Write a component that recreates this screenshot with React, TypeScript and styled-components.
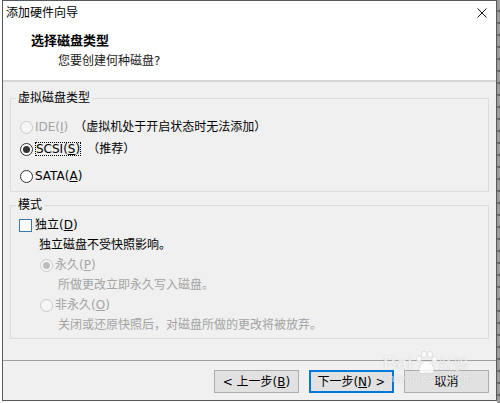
import React from 'react';
import styled, { createGlobalStyle, css } from 'styled-components';

const GlobalStyle = createGlobalStyle`
  html, body {
    margin: 0;
    padding: 0;
    background: #ffffff;
  }
  body {
    font-family: "DejaVu Sans", "Noto Sans CJK SC", sans-serif;
    font-size: 12px;
    color: #000;
  }
`;

const Screen = styled.div`
  display: flex;
  height: 403px;
  padding-left: 2px;
  box-sizing: border-box;
  overflow: hidden;
`;

const Window = styled.div`
  position: relative;
  display: flex;
  flex-direction: column;
  width: 495px;
  height: 401px;
  box-sizing: border-box;
  border: 1px solid #555a5e;
  background: #f0f0f0;
`;

const BackEdge = styled.div`
  width: 3px;
  background: repeating-linear-gradient(to bottom, #9c9c9c 0 10px, #6e6e6e 10px 12px);
`;

const TitleBar = styled.div`
  display: flex;
  align-items: center;
  justify-content: space-between;
  height: 24px;
  padding: 0 9px 0 3px;
  background: #fff;
  line-height: 16px;
`;

const Header = styled.div`
  display: flex;
  flex-direction: column;
  height: 55px;
  box-sizing: border-box;
  padding: 8px 0 0 28px;
  background: #fff;
`;

const HeaderTitle = styled.div`
  font-size: 13px;
  font-weight: 700;
  line-height: 16px;
`;

const HeaderSub = styled.div`
  margin-top: 4px;
  padding-left: 27px;
  line-height: 16px;
  color: #1a1a1a;
`;

const HeaderRule = styled.div`
  height: 2px;
  background: #d6d6d6;
`;

const Body = styled.div`
  flex: 1;
  padding: 0 7px 0 7px;
`;

const GroupBox = styled.fieldset<{ $top: number }>`
  margin: ${({ $top }) => $top}px 0 0 0;
  padding: 0;
  min-inline-size: 0;
  border: 1px solid #dcdcdc;
`;

const Legend = styled.legend`
  margin-left: 5px;
  padding: 0 2px;
  line-height: 14px;
  font-size: 12px;
`;

const GroupBody = styled.div<{ $inset: number; $top: number; $bottom: number }>`
  display: flex;
  flex-direction: column;
  padding: ${({ $top, $inset, $bottom }) => `${$top}px 0 ${$bottom}px ${$inset}px`};
`;

const OptionRow = styled.div<{ $h?: number; $indent?: number; $gap?: number }>`
  display: flex;
  align-items: center;
  height: ${({ $h }) => $h ?? 20}px;
  margin-top: ${({ $gap }) => $gap ?? 0}px;
  padding-left: ${({ $indent }) => $indent ?? 0}px;
  white-space: nowrap;
`;

const RadioMark = styled.span<{ $checked?: boolean; $disabled?: boolean }>`
  position: relative;
  flex: none;
  width: 13px;
  height: 13px;
  box-sizing: border-box;
  margin-right: 2px;
  border-radius: 50%;
  border: 1px solid ${({ $disabled }) => ($disabled ? '#cacaca' : '#333')};
  background: ${({ $disabled }) => ($disabled ? '#f6f6f6' : '#fff')};
  ${({ $checked, $disabled }) =>
    $checked &&
    css`
      &::after {
        content: '';
        position: absolute;
        left: 2px;
        top: 2px;
        width: 7px;
        height: 7px;
        border-radius: 50%;
        background: ${$disabled ? '#bdbdbd' : '#333'};
      }
    `}
`;

const CheckMark = styled.span`
  flex: none;
  width: 13px;
  height: 13px;
  box-sizing: border-box;
  margin-right: 3px;
  border: 1px solid #3a78b0;
  background: #fff;
`;

const Label = styled.span<{ $disabled?: boolean }>`
  line-height: 16px;
  color: ${({ $disabled }) => ($disabled ? '#a3a3a3' : '#000')};
`;

const Focus = styled.span`
  padding: 0 1px;
  outline: 1px dotted #000;
  outline-offset: -1px;
`;

const Note = styled.span`
  margin-left: 6px;
  line-height: 16px;
`;

const Footer = styled.div`
  display: flex;
  justify-content: flex-end;
  gap: 10px;
  padding: 9px 7px 7px 0;
  border-top: 1px solid #a0a0a0;
`;

const Button = styled.button<{ $primary?: boolean }>`
  width: 85px;
  height: 23px;
  box-sizing: border-box;
  padding: 0;
  border: 1px solid #adadad;
  background: #e1e1e1;
  font: inherit;
  font-size: 12px;
  line-height: 16px;
  color: #000;
  ${({ $primary }) =>
    $primary &&
    css`
      border: 2px solid #0078d7;
    `}
`;

const Watermark = styled.div`
  position: absolute;
  left: 380px;
  top: 350px;
  display: flex;
  flex-direction: column;
  align-items: flex-start;
  color: rgba(255, 255, 255, 0.8);
  text-shadow: 0 0 1px rgba(0, 0, 0, 0.22);
  pointer-events: none;
`;

const Brand = styled.div`
  display: flex;
  align-items: center;
  font-family: "Liberation Sans", sans-serif;
  font-size: 19px;
  font-weight: 700;
  line-height: 24px;
`;

const BrandCn = styled.span`
  font-family: "Noto Sans CJK SC", sans-serif;
  font-size: 15px;
  font-weight: 400;
`;

const Site = styled.div`
  margin-top: -2px;
  font-family: "Liberation Sans", sans-serif;
  font-size: 10px;
  line-height: 12px;
  letter-spacing: 0.5px;
`;

const CloseIcon = () => (
  <svg width="10" height="10" viewBox="0 0 10 10">
    <path d="M0.5 0.5 L9.5 9.5 M9.5 0.5 L0.5 9.5" stroke="#111" strokeWidth="1" />
  </svg>
);

const Paw = () => (
  <svg width="26" height="24" viewBox="0 0 26 24">
    <g fill="rgba(255,255,255,0.8)" stroke="rgba(0,0,0,0.12)" strokeWidth="0.8">
      <ellipse cx="6" cy="8" rx="2.6" ry="3.2" />
      <ellipse cx="11" cy="3.5" rx="2.6" ry="3.2" />
      <ellipse cx="17" cy="3.5" rx="2.6" ry="3.2" />
      <ellipse cx="21.5" cy="8.5" rx="2.6" ry="3.2" />
      <path d="M6 20 C6 14 10 10 13.5 10 C17 10 21 14 21 20 C21 23 17 23 13.5 22 C10 23 6 23 6 20 Z" />
    </g>
  </svg>
);

const Key: React.FC<{ children: React.ReactNode }> = ({ children }) => <u>{children}</u>;

export default function App() {
  return (
    <>
      <GlobalStyle />
      <Screen>
        <Window>
          <TitleBar>
            <span>添加硬件向导</span>
            <CloseIcon />
          </TitleBar>
          <Header>
            <HeaderTitle>选择磁盘类型</HeaderTitle>
            <HeaderSub>您要创建何种磁盘?</HeaderSub>
          </Header>
          <HeaderRule />
          <Body>
            <GroupBox $top={9}>
              <Legend>虚拟磁盘类型</Legend>
              <GroupBody $inset={9} $top={11} $bottom={4}>
                <OptionRow $h={22}>
                  <RadioMark $disabled />
                  <Label $disabled>
                    IDE(<Key>I</Key>)
                  </Label>
                  <Note>（虚拟机处于开启状态时无法添加）</Note>
                </OptionRow>
                <OptionRow $h={22}>
                  <RadioMark $checked />
                  <Label>
                    <Focus>
                      SCSI(<Key>S</Key>)
                    </Focus>
                  </Label>
                  <Note>（推荐）</Note>
                </OptionRow>
                <OptionRow $h={22} $gap={5}>
                  <RadioMark />
                  <Label>
                    SATA(<Key>A</Key>)
                  </Label>
                </OptionRow>
              </GroupBody>
            </GroupBox>
            <GroupBox $top={6}>
              <Legend>模式</Legend>
              <GroupBody $inset={8} $top={3} $bottom={3}>
                <OptionRow>
                  <CheckMark />
                  <Label>
                    独立(<Key>D</Key>)
                  </Label>
                </OptionRow>
                <OptionRow $indent={20}>
                  <Label>独立磁盘不受快照影响。</Label>
                </OptionRow>
                <OptionRow $indent={21}>
                  <RadioMark $checked $disabled />
                  <Label $disabled>
                    永久(<Key>P</Key>)
                  </Label>
                </OptionRow>
                <OptionRow $indent={39}>
                  <Label $disabled>所做更改立即永久写入磁盘。</Label>
                </OptionRow>
                <OptionRow $indent={21}>
                  <RadioMark $disabled />
                  <Label $disabled>
                    非永久(<Key>O</Key>)
                  </Label>
                </OptionRow>
                <OptionRow $indent={39}>
                  <Label $disabled>关闭或还原快照后，对磁盘所做的更改将被放弃。</Label>
                </OptionRow>
              </GroupBody>
            </GroupBox>
          </Body>
          <Footer>
            <Button>
              &lt; 上一步(<Key>B</Key>)
            </Button>
            <Button $primary>
              下一步(<Key>N</Key>) &gt;
            </Button>
            <Button>取消</Button>
          </Footer>
          <Watermark>
            <Brand>
              Bai
              <Paw />
              <BrandCn>经验</BrandCn>
            </Brand>
            <Site>jingyan.baidu.com</Site>
          </Watermark>
        </Window>
        <BackEdge />
      </Screen>
    </>
  );
}
